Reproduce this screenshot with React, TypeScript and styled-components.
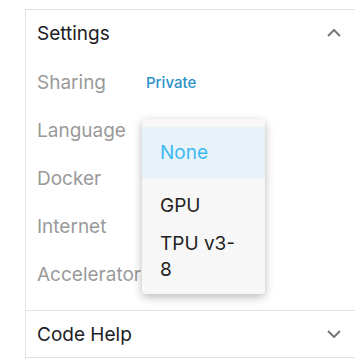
import React from "react";
import styled, { createGlobalStyle } from "styled-components";

const Global = createGlobalStyle`
  html, body { margin: 0; padding: 0; background: #ffffff; }
  body { font-family: Inter, "Noto Sans", sans-serif; width: 355px; height: 359px; overflow: hidden; }
`;

const Page = styled.div`
  position: relative;
  width: 355px;
  height: 359px;
  padding-left: 25px;
  padding-top: 9px;
  box-sizing: border-box;
`;

const Panel = styled.div`
  border-left: 1px solid #e2e2e2;
  height: 100%;
  box-sizing: border-box;
`;

const Section = styled.section`
  border-top: 1px solid #e2e2e2;
`;

const Header = styled.div`
  height: 46px;
  display: flex;
  align-items: center;
  justify-content: space-between;
  padding: 0 14px 0 11px;
  font-size: 19px;
  color: #202124;
`;

const Body = styled.div`
  padding: 2px 0 12px;
`;

const Row = styled.div`
  height: 48px;
  display: flex;
  align-items: center;
  padding-left: 11px;
`;

const Label = styled.div`
  width: 109px;
  font-size: 19px;
  color: #9a9a9a;
  white-space: nowrap;
`;

const Value = styled.div`
  font-size: 15px;
  font-weight: 500;
  color: #2a91c9;
`;

const Menu = styled.ul`
  position: absolute;
  left: 142px;
  top: 119px;
  width: 123px;
  margin: 0;
  padding: 8px 0 5px;
  list-style: none;
  background: #f7f7f7;
  border-radius: 4px;
  box-shadow: 0 3px 10px rgba(0, 0, 0, 0.28);
  box-sizing: border-box;
`;

const Item = styled.li<{ $selected?: boolean; $pt: number; $pb: number }>`
  padding: ${(p) => p.$pt}px 24px ${(p) => p.$pb}px 18px;
  font-size: 19px;
  line-height: 26px;
  color: ${(p) => (p.$selected ? "#3cb9f4" : "#222222")};
  background: ${(p) => (p.$selected ? "#e7f3f9" : "transparent")};
`;

const Chevron = ({ up }: { up?: boolean }) => (
  <svg width="14" height="8" viewBox="0 0 14 8">
    <polyline
      points={up ? "1,7 7,1 13,7" : "1,1 7,7 13,1"}
      fill="none"
      stroke="#777777"
      strokeWidth="2"
    />
  </svg>
);

const rows: [string, string?][] = [
  ["Sharing", "Private"],
  ["Language"],
  ["Docker"],
  ["Internet"],
  ["Accelerator"],
];

export default function App() {
  return (
    <>
      <Global />
      <Page>
        <Panel>
          <Section>
            <Header>
              <span>Settings</span>
              <Chevron up />
            </Header>
            <Body>
              {rows.map(([l, v]) => (
                <Row key={l}>
                  <Label>{l}</Label>
                  {v && <Value>{v}</Value>}
                </Row>
              ))}
            </Body>
          </Section>
          <Section>
            <Header>
              <span>Code Help</span>
              <Chevron />
            </Header>
          </Section>
          <Section />
        </Panel>
        <Menu>
          <Item $selected $pt={13} $pb={13}>None</Item>
          <Item $pt={14} $pb={6}>GPU</Item>
          <Item $pt={6} $pb={6}>TPU v3-8</Item>
        </Menu>
      </Page>
    </>
  );
}
